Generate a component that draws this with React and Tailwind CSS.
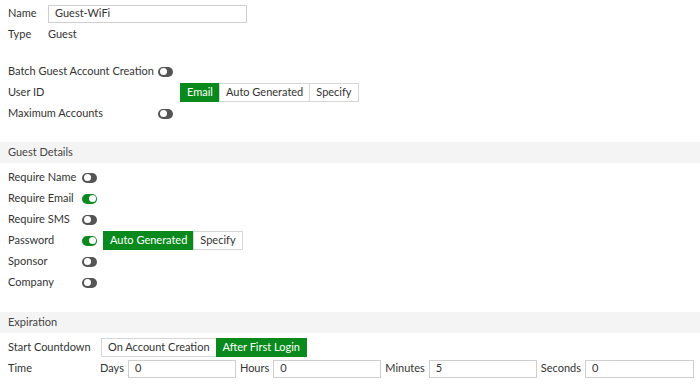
const GREEN = 'bg-[#0a8a1d]'

function Toggle({ on }) {
  return (
    <span className={`relative inline-block shrink-0 w-[15px] h-[10px] rounded-full ${on ? GREEN : 'bg-[#555]'}`}>
      <span
        className={`absolute top-[1.5px] w-[7px] h-[7px] rounded-full bg-white ${on ? 'right-[1.5px]' : 'left-[1.5px]'}`}
      />
    </span>
  )
}

function Segmented({ options, active }) {
  return (
    <div className="flex h-[19px]">
      {options.map((o, i) => (
        <span
          key={o}
          className={`flex items-center px-[6px] border whitespace-nowrap ${
            o === active ? `${GREEN} border-[#0a8a1d] text-white` : 'bg-white border-[#d6d6d6] text-[#333]'
          } ${i > 0 ? '-ml-px' : ''}`}
        >
          {o}
        </span>
      ))}
    </div>
  )
}

function Row({ label, labelW, children }) {
  return (
    <div className="flex items-center h-[21px] pl-2">
      <span className="shrink-0 whitespace-nowrap" style={{ width: labelW }}>{label}</span>
      {children}
    </div>
  )
}

function Band({ title }) {
  return (
    <div className="h-[21px] bg-[#f4f4f4] flex items-center pl-2 text-[#444]">{title}</div>
  )
}

function Field({ w, value }) {
  return (
    <div className="h-[18px] shrink-0 border border-[#cfcfcf] bg-white flex items-center px-[6px]" style={{ width: w }}>
      {value}
    </div>
  )
}

export default function App() {
  return (
    <div className="w-[700px] h-[385px] bg-white text-[11px] text-[#333] overflow-hidden" style={{ fontFamily: 'Lato, "Open Sans", sans-serif' }}>
      <div className="pt-[3px]">
        <div className="flex items-center h-[21px] pl-2">
          <span className="w-[40px]">Name</span>
          <Field w={199} value="Guest-WiFi" />
        </div>
        <div className="flex items-center h-[21px] pl-2">
          <span className="w-[40px]">Type</span>
          <span>Guest</span>
        </div>

        <div className="mt-[16px]">
          <Row label="Batch Guest Account Creation" labelW={150}>
            <Toggle />
          </Row>
          <Row label="User ID" labelW={172}>
            <Segmented options={['Email', 'Auto Generated', 'Specify']} active="Email" />
          </Row>
          <Row label="Maximum Accounts" labelW={150}>
            <Toggle />
          </Row>
        </div>

        <div className="mt-[18px]">
          <Band title="Guest Details" />
        </div>
        <div className="mt-[4px]">
          <Row label="Require Name" labelW={74}><Toggle /></Row>
          <Row label="Require Email" labelW={74}><Toggle on /></Row>
          <Row label="Require SMS" labelW={74}><Toggle /></Row>
          <Row label="Password" labelW={74}>
            <Toggle on />
            <span className="ml-[6px]">
              <Segmented options={['Auto Generated', 'Specify']} active="Auto Generated" />
            </span>
          </Row>
          <Row label="Sponsor" labelW={74}><Toggle /></Row>
          <Row label="Company" labelW={74}><Toggle /></Row>
        </div>

        <div className="mt-[19px]">
          <Band title="Expiration" />
        </div>
        <div className="mt-[4px]">
          <Row label="Start Countdown" labelW={93}>
            <Segmented options={['On Account Creation', 'After First Login']} active="After First Login" />
          </Row>
          <Row label="Time" labelW={92}>
            <div className="flex items-center">
              <span className="mr-[4px]">Days</span>
              <Field w={108} value="0" />
              <span className="ml-[4px] mr-[4px]">Hours</span>
              <Field w={108} value="0" />
              <span className="ml-[4px] mr-[4px]">Minutes</span>
              <Field w={108} value="5" />
              <span className="ml-[4px] mr-[4px]">Seconds</span>
              <Field w={109} value="0" />
            </div>
          </Row>
        </div>
      </div>
    </div>
  )
}
